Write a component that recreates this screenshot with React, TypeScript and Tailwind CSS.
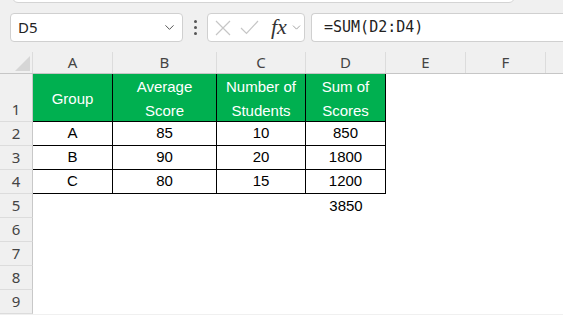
import { ChevronDown } from "lucide-react";

const cols = [
  { key: "A", w: "w-[80px]" },
  { key: "B", w: "w-[104px]" },
  { key: "C", w: "w-[89px]" },
  { key: "D", w: "w-[80px]" },
  { key: "E", w: "w-[80px]" },
  { key: "F", w: "w-[80px]" },
];

// table data: first row is green header
const header = ["Group", "Average\nScore", "Number of\nStudents", "Sum of\nScores"];
const rows: string[][] = [
  ["A", "85", "10", "850"],
  ["B", "90", "20", "1800"],
  ["C", "80", "15", "1200"],
];

const cellFont = { fontFamily: '"Liberation Sans", Arial, sans-serif' };
const uiFont = { fontFamily: '"Noto Sans", "Open Sans", sans-serif' };

function RowHead({ n, tall }: { n: number; tall?: boolean }) {
  return (
    <div
      className={`w-[33px] shrink-0 bg-[#f0f0f0] border-r border-r-[#c8c8c8] border-b border-b-[#dcdcdc] flex justify-center text-[15px] text-[#444] ${
        tall ? "h-[48px] items-end pb-[1px]" : "h-[24px] items-center"
      }`}
      style={uiFont}
    >
      {n}
    </div>
  );
}

export default function App() {
  return (
    <div className="w-[563px] h-[315px] overflow-hidden bg-[#f0f0f0] relative">
      {/* ribbon edge */}
      <div className="absolute left-[12px] top-[-8px] w-[503px] h-[11px] bg-white border border-[#d4d4d4] rounded-b-[6px]" />

      {/* formula bar */}
      <div className="h-[52px] flex items-start pt-[13px] pl-[10px]">
        <div className="w-[173px] h-[29px] bg-white border border-[#d0d0d0] rounded-[4px] flex items-center pl-[7px] pr-[5px] justify-between">
          <span className="text-[15px] text-[#222]" style={uiFont}>
            D5
          </span>
          <ChevronDown className="w-[15px] h-[15px] text-[#555]" strokeWidth={1.6} />
        </div>
        <div className="w-[24px] h-[29px] flex flex-col items-center justify-center gap-[3px]">
          <span className="w-[3px] h-[3px] bg-[#555] rounded-full" />
          <span className="w-[3px] h-[3px] bg-[#555] rounded-full" />
          <span className="w-[3px] h-[3px] bg-[#555] rounded-full" />
        </div>
        <div className="w-[98px] h-[29px] bg-white border border-[#d0d0d0] rounded-[4px] flex items-center pl-[7px]">
          <svg width="16" height="16" viewBox="0 0 16 16" fill="none" stroke="#c6c6c6" strokeWidth="1.2">
            <path d="M1 1 L15 15 M15 1 L1 15" />
          </svg>
          <svg width="19" height="15" viewBox="0 0 19 15" fill="none" stroke="#c6c6c6" strokeWidth="1.2" className="ml-[9px]">
            <path d="M1 8 L6.5 13.5 L18 1" />
          </svg>
          <span
            className="ml-[12px] text-[22px] italic text-[#333] leading-none -mt-[2px]"
            style={{ fontFamily: '"Liberation Serif", "DejaVu Serif", serif' }}
          >
            fx
          </span>
          <ChevronDown className="w-[13px] h-[13px] text-[#888] ml-[3px]" strokeWidth={1.4} />
        </div>
        <div className="ml-[6px] flex-1 h-[29px] bg-white border border-[#d0d0d0] border-r-0 rounded-l-[4px] flex items-center pl-[12px]">
          <span
            className="text-[15px] text-[#222]"
            style={{ fontFamily: '"DejaVu Sans Mono", "Liberation Mono", monospace' }}
          >
            =SUM(D2:D4)
          </span>
        </div>
      </div>

      {/* sheet */}
      <div className="bg-white">
        {/* column headers */}
        <div className="flex h-[22px] bg-[#f0f0f0] border-b border-b-[#c6c6c6]">
          <div className="w-[33px] shrink-0 relative border-r border-r-[#dcdcdc]">
            <div className="absolute right-[2px] bottom-[2px] w-0 h-0 border-l-[15px] border-l-transparent border-b-[15px] border-b-[#d6d6d6]" />
          </div>
          {cols.map((c) => (
            <div
              key={c.key}
              className={`${c.w} shrink-0 border-r border-r-[#dcdcdc] flex items-center justify-center text-[15px] text-[#444]`}
              style={uiFont}
            >
              {c.key}
            </div>
          ))}
          <div className="flex-1" />
        </div>

        {/* row 1 */}
        <div className="flex h-[48px]">
          <RowHead n={1} tall />
          {header.map((h, i) => (
            <div
              key={i}
              className={`${cols[i].w} shrink-0 bg-[#00b050] text-white border-r border-b border-black flex items-center justify-center text-center whitespace-pre-line text-[15px] leading-[24px] pt-[2px]`}
              style={cellFont}
            >
              {h}
            </div>
          ))}
        </div>

        {/* rows 2-4 */}
        {rows.map((r, ri) => (
          <div key={ri} className="flex h-[24px]">
            <RowHead n={ri + 2} />
            {r.map((v, i) => (
              <div
                key={i}
                className={`${cols[i].w} shrink-0 border-r border-b border-black flex items-center justify-center text-[15px] text-black`}
                style={cellFont}
              >
                {v}
              </div>
            ))}
          </div>
        ))}

        {/* row 5 */}
        <div className="flex h-[24px]">
          <RowHead n={5} />
          <div className="w-[80px] shrink-0" />
          <div className="w-[104px] shrink-0" />
          <div className="w-[89px] shrink-0" />
          <div
            className="w-[80px] shrink-0 flex items-center justify-center text-[15px] text-black"
            style={cellFont}
          >
            3850
          </div>
        </div>

        {[6, 7, 8, 9].map((n) => (
          <div key={n} className="flex h-[24px]">
            <RowHead n={n} />
          </div>
        ))}
      </div>
    </div>
  );
}
